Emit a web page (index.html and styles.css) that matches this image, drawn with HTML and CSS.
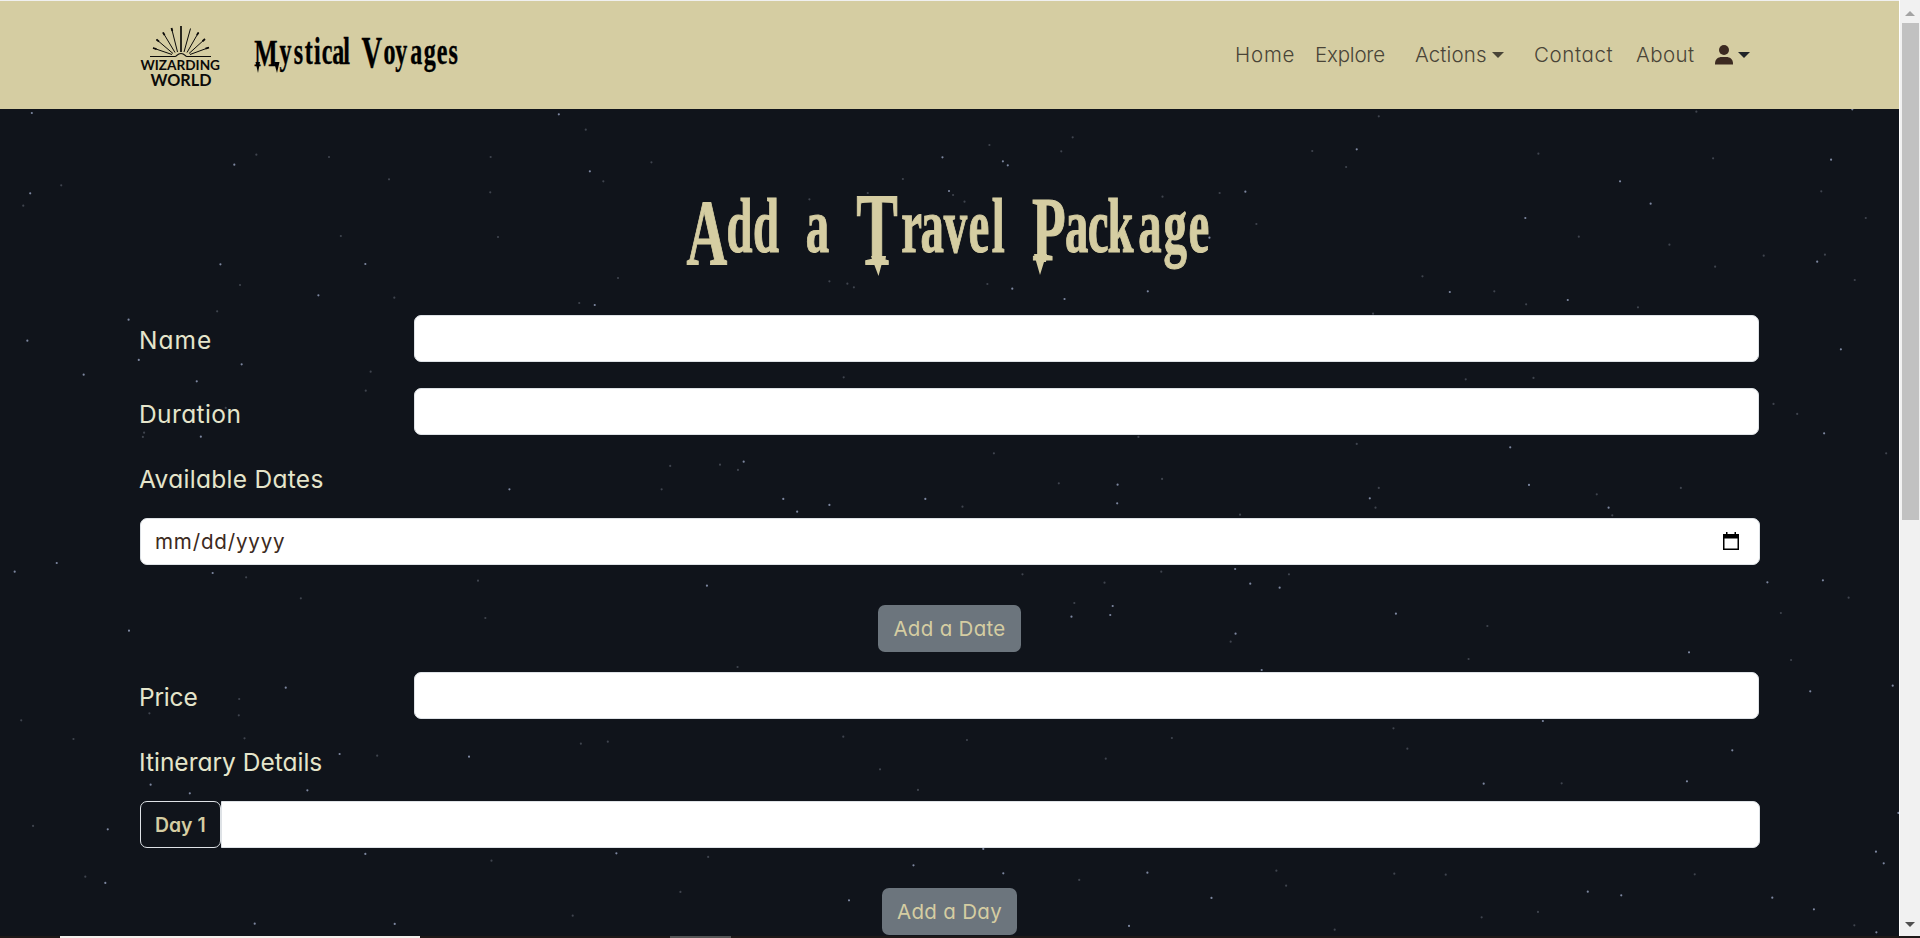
FILE: index.html
```html
<!DOCTYPE html>
<html lang="en">
<head>
<meta charset="utf-8">
<title>Mystical Voyages</title>
<link rel="stylesheet" href="styles.css">
</head>
<body>
<div class="window">
  <div class="page">
    <header class="navbar">
      <div class="brand">
        <svg class="logo" viewBox="140 24 81 63" width="81" height="63">
          <g stroke="#0b0a08" stroke-width="1" fill="none">
            <path d="M181 26V52" stroke-width="1.7"/>
            <path d="M171.5 28L177.5 52M163 32.5L175 52.5M156.5 39.5L173 53.5M153 48L172 54.5M190.5 28.5L184 52M198.5 32.5L187 52.5M205 39L189 53.5M209 47.5L190 54.5"/>
            <path d="M150 56.5H175C177 56.5 177 53.5 181 53.5S185 56.5 187 56.5H211" stroke-width="1.2"/>
            <path d="M171.5 28l.8 3M163 32.5l1.6 2.6M156.5 39.5l2.5 2.1M153 48l3.5 1.2M198.5 32.5l-1.6 2.6M205 39l-2.5 2.2M209 47.5l-3.5 1.2" stroke-width="1.8"/>
          </g>
          <text x="140.5" y="70.3" class="logo-text" font-size="14" textLength="79.5" lengthAdjust="spacingAndGlyphs">WIZARDING</text>
          <text x="150.5" y="85.7" class="logo-text" font-size="17" textLength="61" lengthAdjust="spacingAndGlyphs">WORLD</text>
        </svg>
        <svg class="brand-name" viewBox="250 30 215 50" width="215" height="50">
          <text class="brand-text" transform="scale(.65 1)" y="64" x="391 430 452 469 483 495 511 528 540 556 590 608 631 652 672 690"><tspan font-size="38" dy="2">M</tspan><tspan dy="-2">ystical </tspan><tspan font-size="44" dy="3">V</tspan><tspan dy="-3">oyages</tspan></text>
          <path d="M255.500 62h4.500l-2 11zM274 62h5.500l-2.500 11z"/>
        </svg>
      </div>
      <nav class="links">
        <a class="l-home">Home</a>
        <a class="l-explore">Explore</a>
        <a class="l-actions">Actions<i class="caret"></i></a>
        <a class="l-contact">Contact</a>
        <a class="l-about">About</a>
        <a class="l-user"><svg width="18" height="20" viewBox="0 0 18 20"><circle cx="9" cy="5" r="5" fill="#3c2a21"/><path d="M0 19.500V18.500C0 14 3.500 12 6.500 12H11.500C14.500 12 18 14 18 18.500V19.500Z" fill="#3c2a21"/></svg><i class="caret"></i></a>
      </nav>
    </header>
    <main class="content">
      <svg class="stars" width="1899" height="936" viewBox="0 0 1899 936">
        <g class="star bright">
          <path transform="translate(0 100) scale(.4082 .3333)" d="M78 39h0M1369 43h0M574 194h0M74 280h0M1445 214h0M540 493h0M895 492h0M780 586h0M315 659h0M67 722h0M340 780h0M205 824h0M482 844h0M1457 615h0M592 793h0M492 1010h0M1248 1168h0"/>
          <path transform="translate(640 100) scale(.4082 .3333)" d="M741 172h0M901 196h0M889 184h0M757 273h0M1483 275h0M1395 413h0M1040 597h0M1244 574h0M912 566h0M254 1085h0M351 1197h0M464 1215h0M385 1235h0M1170 1154h0M1169 1210h0M699 1197h0"/>
          <path transform="translate(1280 100) scale(.4082 .3333)" d="M188 148h0M833 244h0M908 311h0M601 354h0M1350 179h0M1316 485h0M416 576h0M705 600h0M1374 748h0M1333 1000h0M564 1042h0M610 1155h0M220 1195h0M805 1223h0M1402 28h0"/>
          <path transform="translate(0 520) scale(.4082 .3333)" d="M139 129h0M521 159h0M316 332h0M700 503h0M832 702h0M1149 710h0M437 711h0M369 794h0M465 820h0M753 811h0M264 928h0M895 1002h0M1510 1000h0M258 1089h0M624 1211h0M967 1212h0M36 155h0"/>
          <path transform="translate(640 520) scale(.4082 .3333)" d="M164 197h0M1158 258h0M1152 285h0M1057 290h0M1459 341h0M1495 191h0M1458 147h0M1523 450h0M670 1036h0M890 1060h0M1243 1058h0M1400 1134h0M512 1141h0M1198 1218h0M841 987h0M1567 203h0"/>
          <path transform="translate(1280 520) scale(.4082 .3333)" d="M284 281h0M1002 397h0M1330 181h0M1194 187h0M1299 514h0M1501 497h0M1108 691h0M997 784h0M499 791h0M644 603h0M1460 995h0M1479 1030h0M754 1115h0M836 1126h0M1206 1133h0M1308 1168h0M1461 1237h0M1515 879h0"/>
        </g>
        <g class="star dim">
          <path transform="translate(0 100) scale(.4082 .3333)" d="M1435 89h0M628 164h0M806 171h0M1202 171h0M953 238h0M150 256h0M57 317h0M1478 244h0M1201 277h0M835 408h0M1220 411h0M588 555h0M532 634h0M966 593h0M1514 534h0M1419 609h0M908 815h0M896 872h0M353 998h0M350 1011h0M553 924h0M697 1123h0"/>
          <path transform="translate(640 100) scale(.4082 .3333)" d="M28 187h0M856 135h0M1060 112h0M1032 154h0M644 237h0M558 279h0M767 285h0M795 305h0M415 298h0M1280 290h0M1420 279h0M1510 372h0M464 544h0M508 551h0M524 562h0M851 552h0M499 832h0M867 1060h0M1221 1011h0M74 1098h0M196 1094h0M1026 1150h0M1279 1137h0M790 1220h0M1470 1244h0M240 1110h0M53 1168h0"/>
          <path transform="translate(1280 100) scale(.4082 .3333)" d="M242 49h0M1020 35h0M79 153h0M162 201h0M633 161h0M1061 175h0M1326 274h0M1435 354h0M732 410h0M954 434h0M1185 467h0M1335 464h0M1066 500h0M1408 540h0M349 529h0M525 574h0M603 613h0M877 622h0M228 641h0M455 838h0M621 834h0M1209 912h0M1267 942h0M1485 1060h0M188 1032h0M242 1164h0M234 1223h0M776 1183h0M982 1164h0M814 1246h0"/>
          <path transform="translate(0 520) scale(.4082 .3333)" d="M603 172h0M737 235h0M1171 182h0M1189 294h0M586 537h0M585 586h0M366 580h0M599 655h0M52 601h0M180 657h0M924 707h0M1423 671h0M1489 665h0M81 918h0M1204 1022h0M209 1070h0M1403 1187h0"/>
          <path transform="translate(640 520) scale(.4082 .3333)" d="M937 163h0M1064 249h0M1138 188h0M1277 155h0M1447 365h0M239 441h0M498 650h0M801 660h0M1303 654h0M1141 716h0M588 748h0M681 810h0M167 1011h0M99 1116h0M1076 1080h0M1559 1052h0"/>
          <path transform="translate(1280 520) scale(.4082 .3333)" d="M22 163h0M1393 233h0M1227 279h0M508 318h0M462 417h0M1252 420h0M278 625h0M312 686h0M690 790h0M280 1061h0M406 1064h0M1016 1063h0M15 1097h0M632 1176h0M494 1192h0M1407 1216h0M134 1229h0"/>
        </g>
      </svg>
      <h1 class="title">
        <svg viewBox="680 190 540 90" width="540" height="90">
          <text class="title-text" transform="scale(.6 1)" y="252" x="1144 1211 1255 1300 1343 1390 1427 1502 1534 1573 1614 1653 1690 1720 1775 1813 1846 1897 1939 1981"><tspan font-size="94" dy="12">A</tspan><tspan dy="-12">dd a </tspan><tspan font-size="104" dy="13">T</tspan><tspan dy="-13">ravel </tspan><tspan font-size="92" dy="8">P</tspan><tspan dy="-8">ackage</tspan></text>
          <path class="bolt" d="M871 256h15l-1 7h-3l-3.500 13zM1034 254h13l-1 8h-2l-4 13z"/>
        </svg>
      </h1>
      <div class="row"><label class="label t-name">Name</label><input class="field" type="text"></div>
      <div class="row"><label class="label t-duration">Duration</label><input class="field" type="text"></div>
      <div class="heading t-dates">Available Dates</div>
      <div class="date-field"><span class="t-placeholder">mm/dd/yyyy</span>
        <svg class="calendar" width="16" height="18" viewBox="0 0 16 18"><path d="M0 2H16V18H0ZM1.500 6.500V16.500H14.500V6.500Z" fill="#000" fill-rule="evenodd"/><path d="M3 0h1.500v2H3zM11.500 0H13v2h-1.500z"/></svg>
      </div>
      <button class="btn btn-date">Add a Date</button>
      <div class="row row-price"><label class="label t-price">Price</label><input class="field" type="text"></div>
      <div class="heading t-itinerary">Itinerary Details</div>
      <div class="day-group"><span class="day">Day 1</span><input class="day-field" type="text"></div>
      <button class="btn btn-day">Add a Day</button>
    </main>
  </div>
  <div class="scrollbar"><i class="up"></i><div class="thumb"></div><i class="down"></i></div>
</div>
<div class="taskbar"><i class="tab-light"></i><i class="tab-grey"></i></div>
</body>
</html>
```
FILE: styles.css
```css
* { box-sizing: border-box; }
body {
  margin: 0;
  height: 938px;
  overflow: hidden;
  background: #10141b;
  font-family: Inter, "Open Sans", sans-serif;
  font-feature-settings: "cv11";
}
.window { display: flex; height: 936px; }
.page { width: 1899px; height: 936px; overflow: hidden; }
.navbar {
  display: flex;
  justify-content: space-between;
  height: 109px;
  padding: 0 149px 0 140px;
  border-top: 1px solid #f0f0f0;
  background: #d5cda2;
}
.brand { display: flex; gap: 29px; }
.logo { margin-top: 23px; overflow: visible; }
.logo-text { font-family: Lato, sans-serif; font-weight: 700; fill: #0b0a08; }
.brand-name { margin-top: 29px; overflow: visible; }
.brand-text { font: bold 37px "Liberation Serif", serif; fill: #000; stroke: #000; stroke-width: .4px; }
.links { display: flex; height: 108px; align-items: center; font-size: 20.500px; font-weight: 300; color: #494437; }
.links a { display: flex; align-items: center; white-space: nowrap; line-height: 24px; text-indent: -1px; }
.l-home { width: 80px; letter-spacing: .8px; }
.l-explore { width: 100px; letter-spacing: -.2px; }
.l-actions { width: 119px; letter-spacing: .1px; }
.l-contact { width: 102px; letter-spacing: .6px; }
.l-about { width: 78px; letter-spacing: .4px; }
.l-user { width: 35px; color: #212529; }
.caret { margin-left: 5px; border: 6px solid transparent; border-top-color: currentColor; border-bottom: 0; }
.content { position: relative; height: 827px; padding: 81px 140px 0 140px; }
.stars { position: absolute; left: 0; top: -109px; z-index: -1; }
.star { fill: none; stroke-linecap: round; }
.star path { vector-effect: non-scaling-stroke; }
.bright { stroke: #7c869f; stroke-width: 2.2px; }
.dim { stroke: #3f444e; stroke-width: 2.2px; }
.title { height: 90px; margin: 0 0 35px 540px; line-height: 0; }
.title svg { overflow: visible; }
.title-text { font: bold 78px "Liberation Serif", serif; fill: #d5cda2; stroke: #d5cda2; stroke-width: 1.2px; }
.bolt { fill: #d5cda2; }
.row { display: flex; height: 47px; margin-bottom: 26px; }
.label { width: 274px; padding-top: 11px; flex-shrink: 0; }
.label, .heading { color: #e5e5cb; font-size: 24.500px; line-height: 29px; white-space: nowrap; text-indent: -1px; }
.t-name { letter-spacing: 1px; }
.t-duration { letter-spacing: .4px; padding-top: 12px; }
.t-dates { letter-spacing: .3px; }
.t-price { letter-spacing: -.2px; }
.t-itinerary { letter-spacing: 0; }
.t-placeholder { letter-spacing: .8px; font-size: 20.600px; margin-top: -1px; }
.calendar { margin-top: -2px; }
.field { width: 1345px; }
.field, .day-field, .date-field { height: 47px; flex-shrink: 0; border: 1px solid #dee2e6; border-radius: 7px; background: #fff; }
.heading { height: 29px; margin: 30px 0 24px; }
.heading.t-itinerary { margin-top: 29px; }
.date-field { display: flex; justify-content: space-between; align-items: center; width: 1620px; padding: 0 20px 0 14px; font-size: 20px; color: #3c2a21; }
.btn { display: block; height: 47px; margin: 40px auto 20px; padding: 0; border: 0; border-radius: 7px; background: #6c757d; color: #d5cda2; font: 400 20.500px Inter, sans-serif; font-feature-settings: "cv11"; letter-spacing: .3px; }
.btn-date { width: 143px; }
.btn-day { width: 135px; }
.day-group { display: flex; width: 1620px; height: 47px; }
.day { width: 81px; height: 47px; padding-left: 14px; border: 1px solid #dee2e6; border-radius: 7px; color: #d5cda2; font-size: 19.400px; font-weight: 600; line-height: 46px; white-space: nowrap; }
.day-field { flex: 1; border-radius: 0 7px 7px 0; }
.scrollbar { display: flex; flex-direction: column; align-items: center; width: 21px; border-left: 1px solid #fff; background: #f1f1f1; }
.up { margin-top: 11px; border: 5px solid transparent; border-bottom-color: #a3a3a3; border-top: 0; }
.thumb { width: 17px; height: 497px; margin-top: 7px; background: #c1c1c1; }
.down { margin: auto 0 9px; border: 5px solid transparent; border-top-color: #505050; border-bottom: 0; }
.taskbar { display: flex; height: 2px; padding-left: 60px; background: #1e1918; }
.tab-light { width: 360px; background: #f3efeb; }
.tab-grey { width: 61px; margin-left: 250px; background: #555; }
```
